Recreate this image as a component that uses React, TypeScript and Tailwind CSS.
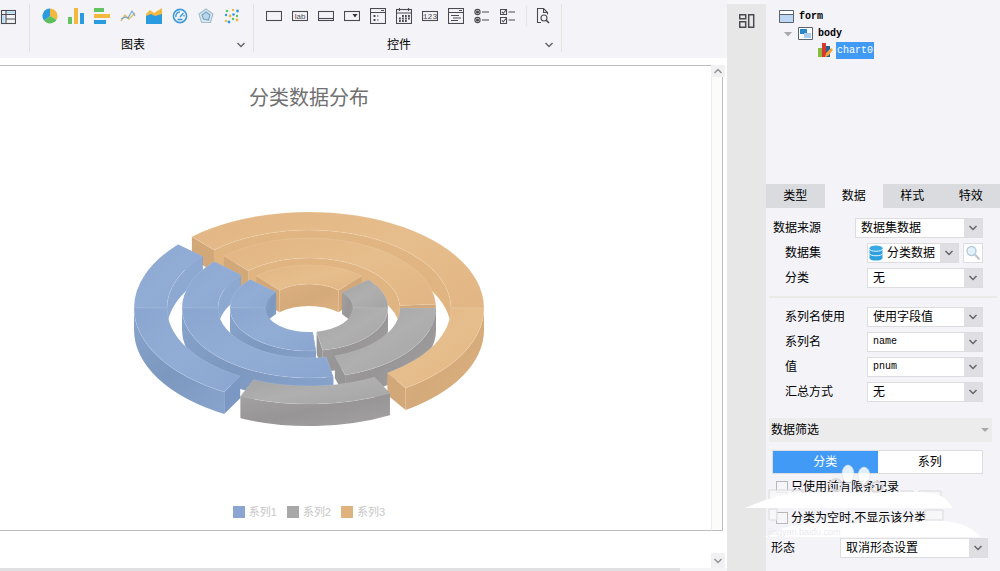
import React, { useState } from 'react';

const CX = 176;
const CY = 97;
const DEPTH = 22;

const RINGS = [
  { rx: 175, ry: 96, irx: 142, iry: 78 },
  { rx: 127, ry: 70, irx: 91, iry: 50 },
  { rx: 79, ry: 43, irx: 44, iry: 24 },
];

type Tone = { top: string; wall: string; side: string; inner: string };

const BLUE: Tone = { top: 'url(#blueTop)', wall: 'url(#blueWall)', side: '#7b97c3', inner: '#8ea9d1' };
const GREY: Tone = { top: 'url(#greyTop)', wall: 'url(#greyWall)', side: '#979696', inner: '#a9a8a8' };
const ORANGE: Tone = { top: 'url(#orangeTop)', wall: 'url(#orangeWall)', side: '#d3a878', inner: '#e0b582' };

// Angles in degrees, clockwise from the right hand side
const SLICES: { ring: number; from: number; to: number; tone: Tone }[] = [
  { ring: 0, from: -132, to: 56.5, tone: ORANGE },
  { ring: 0, from: 62.5, to: 113, tone: GREY },
  { ring: 0, from: 119, to: 221.5, tone: BLUE },
  { ring: 1, from: -132, to: -3, tone: ORANGE },
  { ring: 1, from: 0, to: 73.5, tone: GREY },
  { ring: 1, from: 79, to: 221.5, tone: BLUE },
  { ring: 2, from: -132, to: -48, tone: ORANGE },
  { ring: 2, from: -41, to: 80, tone: GREY },
  { ring: 2, from: 85, to: 221.5, tone: BLUE },
];

const point = (rx: number, ry: number, deg: number, dy = 0) => {
  const a = (deg * Math.PI) / 180;
  return `${(CX + rx * Math.cos(a)).toFixed(2)} ${(CY + ry * Math.sin(a) + dy).toFixed(2)}`;
};

const Segment: React.FC<{ ring: number; from: number; to: number; tone: Tone; back: boolean; cutFrom: boolean; cutTo: boolean }> = ({
  ring, from, to, tone, back, cutFrom, cutTo,
}) => {
  const { rx, ry, irx, iry } = RINGS[ring];
  const wx = back ? irx : rx;
  const wy = back ? iry : ry;
  const top = `M${point(rx, ry, from)}A${rx} ${ry} 0 0 1 ${point(rx, ry, to)}L${point(irx, iry, to)}A${irx} ${iry} 0 0 0 ${point(irx, iry, from)}Z`;
  const wall = `M${point(wx, wy, from)}A${wx} ${wy} 0 0 1 ${point(wx, wy, to)}L${point(wx, wy, to, DEPTH)}A${wx} ${wy} 0 0 0 ${point(wx, wy, from, DEPTH)}Z`;
  const cut = (a: number) => `M${point(rx, ry, a)}L${point(irx, iry, a)}L${point(irx, iry, a, DEPTH)}L${point(rx, ry, a, DEPTH)}Z`;
  return (
    <g>
      {cutFrom && <path d={cut(from)} fill={tone.side} />}
      {cutTo && <path d={cut(to)} fill={tone.side} />}
      <path d={wall} fill={back && ring < 2 ? tone.inner : tone.wall} />
      <path d={top} fill={tone.top} stroke="#fff" strokeOpacity="0.18" strokeWidth="0.6" />
    </g>
  );
};

const RingChart: React.FC = () => {
  const parts = SLICES.flatMap((s) => {
    const list = [];
    if (s.from < 0) list.push({ ...s, to: Math.min(s.to, 0), back: true, cutFrom: true, cutTo: s.to < 0 });
    if (s.to > 180) list.push({ ...s, from: 180, back: true, cutFrom: false, cutTo: true });
    if (s.to > 0) list.push({ ...s, from: Math.max(s.from, 0), to: Math.min(s.to, 180), back: false, cutFrom: s.from >= 0, cutTo: s.to <= 180 });
    return list;
  });
  // far half is painted outside in, near half inside out
  const ordered = [
    ...parts.filter((p) => p.back).sort((a, b) => a.ring - b.ring),
    ...parts.filter((p) => !p.back).sort((a, b) => b.ring - a.ring),
  ];
  const gradients = [
    ['blueTop', '#8aa6d0', '#92add5'],
    ['blueWall', '#88a4cd', '#7d98bf'],
    ['greyTop', '#a5a4a4', '#b0afaf'],
    ['greyWall', '#a3a1a1', '#979595'],
    ['orangeTop', '#e2b684', '#e6bd8c'],
    ['orangeWall', '#dcb07f', '#d5aa7a'],
  ];
  return (
    <svg width="352" height="216" viewBox="0 0 352 216" role="img" aria-label="分类数据分布">
      <defs>
        {gradients.map(([id, a, b]) => (
          <linearGradient key={id} id={id} x1="0" y1="0" x2="1" y2="1">
            <stop offset="0" stopColor={a} />
            <stop offset="0.5" stopColor={b} />
            <stop offset="1" stopColor={a} />
          </linearGradient>
        ))}
      </defs>
      {ordered.map((p, i) => (
        <Segment key={i} {...p} />
      ))}
    </svg>
  );
};

const Icon: React.FC<{ children: React.ReactNode; size?: number }> = ({ children, size = 16 }) => (
  <svg width={size} height={size} viewBox="0 0 16 16" fill="none" stroke="#4a4a50" strokeWidth="1.1" aria-hidden="true">
    {children}
  </svg>
);

const Chevron: React.FC<{ up?: boolean }> = ({ up }) => (
  <svg width="10" height="10" viewBox="0 0 10 10" fill="none" stroke="#66666c" strokeWidth="1.5" aria-hidden="true">
    <path d={up ? 'M1.5 7 5 3.5 8.5 7' : 'M1.5 3 5 6.5 8.5 3'} />
  </svg>
);

const chartIcons = [
  { name: '饼图', icon: <g stroke="none"><path d="M8 8V.5A7.5 7.5 0 0 1 14.5 11.7z" fill="#f3b83f" /><path d="M8 8l6.5 3.7A7.5 7.5 0 0 1 2 12.5z" fill="#5cbf5a" /><path d="M8 8 2 12.5A7.5 7.5 0 0 1 8 .5z" fill="#2b9be0" /></g> },
  { name: '柱形图', icon: <g stroke="none"><path d="M12 5h4v11h-4z" fill="#2b9be0" /><path d="M0 9h4v7H0z" fill="#62c462" /><path d="M6 0h4v16H6z" fill="#f3b83f" /></g> },
  { name: '条形图', icon: <g stroke="none"><path d="M0 0h10v4H0z" fill="#62c462" /><path d="M0 6h16v4H0z" fill="#f3b83f" /><path d="M0 12h12v4H0z" fill="#2b9be0" /></g> },
  { name: '折线图', icon: <><path d="M1 13 5 7l4 4 6-6" stroke="#e4bd6a" strokeWidth="1.4" /><path d="M1 11l4-2 3 1 4-7 3 5" stroke="#6aa3c9" /></> },
  { name: '面积图', icon: <g stroke="none"><path d="M0 6l4-4 4 3 8-5v10H0z" fill="#f3b83f" /><path d="M0 8l5-2 4 2 7-2v10H0z" fill="#2b9be0" /></g> },
  { name: '仪表盘', icon: <><circle cx="8" cy="8" r="6.6" stroke="#3f9bd8" strokeWidth="1.6" /><path d="M4 9a4 4 0 0 1 4-5M12 8.5V7M8 9l3.5-4" stroke="#3f9bd8" strokeWidth="1.4" /><path d="M5.5 11.5h5" stroke="#3f9bd8" strokeWidth="1.6" /></> },
  { name: '雷达图', icon: <><path d="M8 1l7 5-2.6 8.5H3.6L1 6z" fill="#dce6ee" stroke="#a4bccb" /><path d="M8 4l4 3-1.5 5-5-1L4 7z" fill="#b9d6e9" stroke="#6fa5c6" /></> },
  { name: '散点图', icon: <g stroke="none"><g fill="#f3b83f"><circle cx="9" cy="2" r="1.2" /><circle cx="6" cy="8" r="1.4" /><circle cx="13" cy="12" r="1.4" /><circle cx="2" cy="13" r="1.2" /></g><g fill="#2b9be0"><circle cx="13.5" cy="3" r="1.4" /><circle cx="9.5" cy="6.5" r="1.3" /><circle cx="2" cy="7" r="1.2" /><circle cx="5" cy="14" r="1.4" /></g><g fill="#62c462"><circle cx="3" cy="3" r="1.3" /><circle cx="13" cy="8" r="1.2" /><circle cx="9" cy="11" r="1.3" /></g></g> },
];

const controlIcons = [
  { name: '文本框', icon: <rect x="0.5" y="3.5" width="15" height="9" /> },
  { name: '标签', icon: <><rect x="0.5" y="3.5" width="15" height="9" /><text x="8" y="10.5" textAnchor="middle" fontSize="8" fontFamily="Liberation Sans, sans-serif" fill="#4a4a50" stroke="none">lab</text></> },
  { name: '按钮', icon: <><rect x="0.5" y="3.5" width="15" height="9" /><path d="M0 10.5h16" /></> },
  { name: '下拉框', icon: <><rect x="0.5" y="3.5" width="15" height="9" /><path d="M8.5 6h5L11 9.5z" fill="#333" stroke="none" /></> },
  { name: '下拉树', icon: <><rect x="0.5" y="0.5" width="15" height="15" /><path d="M0 4.5h16M11 2.5h3" /><path d="M3.5 7h2v2h-2zM3.5 11h2v2h-2z" fill="#4a4a50" stroke="none" /><path d="M7 8h1.5M7 12h1.5" /></> },
  { name: '日期', icon: <><rect x="0.5" y="1.5" width="15" height="14" /><path d="M0 5h16M3.5 0v3M12.5 0v3" /><path d="M6 8h8M3 10.5h11M3 13h8" strokeWidth="1.8" strokeDasharray="1.8 1.2" /></> },
  { name: '数字', icon: <><rect x="0.5" y="3.5" width="15" height="9" /><text x="8" y="10.8" textAnchor="middle" fontSize="8" fontFamily="Liberation Mono, monospace" fill="#4a4a50" stroke="none">123</text></> },
  { name: '文本域', icon: <><rect x="0.5" y="0.5" width="15" height="15" /><path d="M0 4.5h16M11 2.5h3M3 7.5h8M5 10h8M3 12.5h7" /></> },
  { name: '单选', icon: <><circle cx="3.5" cy="4" r="2.6" /><circle cx="3.5" cy="12" r="2.6" /><circle cx="3.5" cy="4" r="1" fill="#4a4a50" /><circle cx="3.5" cy="12" r="1" fill="#4a4a50" /><path d="M8 4h7M8 12h7" /></> },
  { name: '复选', icon: <><path d="M.5 1.5h6v5h-6zM.5 9.5h6v6h-6zM8.5 4H15M8.5 12H15" /><path d="M2 4l1.3 1.3L6 2M2 12.5l1.3 1.3L6 10.5" /></> },
];

const TREE_FONT = "font-['Liberation_Mono','Noto_Sans_CJK_SC',monospace]";

const ToolGroup: React.FC<{ title: string; icons: { name: string; icon: React.ReactNode }[]; extra?: React.ReactNode; width: string }> = ({
  title, icons, extra, width,
}) => (
  <div className={`${width} flex h-full flex-none flex-col`}>
    <div className="flex h-8 items-center gap-[10px] pl-3">
      {icons.map((it) => (
        <button key={it.name} title={it.name} className="flex-none">
          <Icon>{it.icon}</Icon>
        </button>
      ))}
      {extra}
    </div>
    <div className="flex h-[26px] items-center pr-[7px]">
      <span className="flex-1 text-center text-[12px]">{title}</span>
      <button aria-label={`${title} 更多`}><Chevron /></button>
    </div>
  </div>
);

const Divider = () => <div className="mt-1 h-12 w-px flex-none bg-[#e4e4de]" />;

interface DropProps {
  id: string;
  label?: string;
  options: string[];
  width: string;
  mono?: boolean;
  icon?: React.ReactNode;
}

const Drop: React.FC<DropProps> = ({ id, options, width, mono, icon, label }) => (
  <div className={`relative h-5 flex-none ${width}`}>
    {icon && <span className="absolute left-px top-[2px]">{icon}</span>}
    <select
      id={id}
      aria-label={label}
      className={`block h-5 w-full appearance-none border border-[#dcdce1] bg-white leading-[18px] outline-none ${
        icon ? 'pl-[19px]' : 'pl-[5px]'
      } ${mono ? `${TREE_FONT} text-[10px]` : 'text-[12px]'}`}
    >
      {options.map((o) => <option key={o}>{o}</option>)}
    </select>
    <span className="pointer-events-none absolute right-px top-px flex h-[18px] w-[18px] items-center justify-center bg-[#dedee3]">
      <Chevron />
    </span>
  </div>
);

const Field: React.FC<{ id: string; label: string; outer?: boolean; children: React.ReactNode }> = ({ id, label, outer, children }) => (
  <div className={`flex h-[25px] items-center justify-between pr-[17px] ${outer ? 'pl-[7px]' : 'pl-[19px]'}`}>
    <label htmlFor={id}>{label}</label>
    {children}
  </div>
);

const DatabaseIcon = () => (
  <svg width="16" height="16" viewBox="0 0 16 16" aria-hidden="true">
    <path d="M1.5 3v10c0 3.4 13 3.4 13 0V3z" fill="#2ea0de" />
    <ellipse cx="8" cy="3" rx="6.5" ry="2.5" fill="#39aae6" />
    <path d="M1.5 4c0 3 13 3 13 0M1.5 8.5c0 3 13 3 13 0" fill="none" stroke="#e9f6fd" strokeWidth="1" />
  </svg>
);

const Tree = () => (
  <ul className={`h-[184px] flex-none pt-2 text-[10px] font-semibold ${TREE_FONT}`}>
    <li className="flex h-[17px] items-center gap-[5px] pl-[13px]">
      <svg width="15" height="15" viewBox="0 0 15 15" aria-hidden="true"><path d="M.5 1.5h14v12H.5z" fill="#bcd6f3" stroke="#5b6570" /><path d="M1 2h13v3H1z" fill="#fff" /><path d="M1 5.5h13" stroke="#5b6570" /></svg>
      form
    </li>
    <li className="flex h-[17px] items-center gap-[5px] pl-[17px]">
      <svg width="10" height="8" viewBox="0 0 10 8" aria-hidden="true"><path d="M1 2h8L5 6.5z" fill="#a9a9ac" /></svg>
      <svg width="15" height="15" viewBox="0 0 15 15" aria-hidden="true"><path d="M.5 1.5h14v12H.5z" fill="#fff" stroke="#5b6570" /><path d="M2 3h7v5H2z" fill="#2787c9" /><path d="M6 7h7v5H6z" fill="#a8cdf0" /></svg>
      body
    </li>
    <li className="flex h-[17px] items-center gap-[3px] pl-[52px]">
      <svg width="15" height="15" viewBox="0 0 15 15" aria-hidden="true"><path d="M0 5h4v9H0z" fill="#8aba3c" /><path d="M8 3h4v11H8z" fill="#20639c" /><path d="M4 0h4v14H4z" fill="#d8382f" /><path d="M7 14l1-4 5-5 2 2-5 6z" fill="#f2a33c" /></svg>
      <span className="bg-[#419af5] px-px leading-[17px] font-normal text-white">chart0</span>
    </li>
  </ul>
);

// Cloud mark with paw dots laid over the lower options
const CloudMark = () => (
  <svg className="pointer-events-none absolute -left-[25px] -top-[11px]" width="260" height="97" viewBox="0 0 260 97" aria-hidden="true">
    <g fill="#f7f7fa" fillOpacity="0.8" stroke="#d9d9de" strokeWidth="1">
      <path d="M28 27h34v9H28zM160 28h12v9h-12zM178 28h22v9h-22zM28 46h8v11h-8zM184 47h18v10h-18z" />
    </g>
    <g fill="#fff" fillOpacity="0.85" stroke="#d5dce5" strokeWidth="0.6">
      <ellipse cx="107" cy="11" rx="6" ry="9" />
      <ellipse cx="123" cy="13" rx="6" ry="9" />
      <circle cx="95" cy="22" r="6" fill="none" stroke="#dcdce0" strokeWidth="2" />
      <ellipse cx="136" cy="24" rx="6" ry="5" fill="none" stroke="#dcdce0" strokeWidth="2" />
    </g>
    <path d="M4 45C16 40 26 36 38 33c30-5 60-3 92-3 28 0 58-4 72 4 4 3 7 7 10 11z" fill="#fff" />
    <path d="M24 74C34 68 44 63 58 62c40-3 80-1 112-3 20-2 40-2 52 3 8 3 14 8 18 12z" fill="#fff" />
    <text x="27" y="72" fontSize="9" fontFamily="Liberation Sans, sans-serif" fill="#e9e9ed">jingyan.baidu.com</text>
  </svg>
);

const tabs = ['类型', '数据', '样式', '特效'];

const PropertyPanel: React.FC = () => {
  const [tab, setTab] = useState('数据');
  const [filter, setFilter] = useState('分类');

  return (
    <aside className="flex w-[234px] flex-none flex-col">
      <Tree />
      <div className="grid h-6 flex-none grid-cols-4 bg-[#d9dbdf]" role="tablist">
        {tabs.map((t) => (
          <button key={t} role="tab" aria-selected={t === tab} onClick={() => setTab(t)} className={t === tab ? 'bg-[#f3f3f8]' : ''}>
            {t}
          </button>
        ))}
      </div>

      <div className="pt-[7px]">
        <Field id="source" label="数据来源" outer>
          <Drop id="source" options={['数据集数据']} width="w-[128px]" />
        </Field>
        <Field id="dataset" label="数据集">
          <div className="flex gap-1">
            <Drop id="dataset" options={['分类数据']} width="w-[92px]" icon={<DatabaseIcon />} />
            <button aria-label="查看" className="flex h-5 w-5 items-center justify-center border border-[#dcdce1] bg-white">
              <svg width="16" height="16" viewBox="0 0 16 16" fill="none" aria-hidden="true"><circle cx="6.5" cy="6" r="4.5" fill="#e3f1fa" stroke="#b4cbdc" strokeWidth="1.4" /><path d="M10 9.5l4.5 5" stroke="#c2c4c8" strokeWidth="2" /></svg>
            </button>
          </div>
        </Field>
        <Field id="category" label="分类">
          <Drop id="category" options={['无']} width="w-[116px]" />
        </Field>
      </div>
      <hr className="mx-[3px] my-[6px] border-t-2 border-[#e9e9e6]" />
      <Field id="seriesUse" label="系列名使用">
        <Drop id="seriesUse" options={['使用字段值']} width="w-[116px]" />
      </Field>
      <Field id="seriesName" label="系列名">
        <Drop id="seriesName" options={['name']} width="w-[116px]" mono />
      </Field>
      <Field id="value" label="值">
        <Drop id="value" options={['pnum']} width="w-[116px]" mono />
      </Field>
      <Field id="summary" label="汇总方式">
        <Drop id="summary" options={['无']} width="w-[116px]" />
      </Field>

      <button className="mt-[14px] mr-2 ml-[3px] flex h-6 flex-none items-center justify-between bg-[#ececed] px-[2px]">
        数据筛选
        <svg width="10" height="8" viewBox="0 0 10 8" aria-hidden="true"><path d="M1 2h8L5 6z" fill="#a9a9ac" /></svg>
      </button>
      <div className="mt-2 mr-[17px] ml-[6px] grid h-6 flex-none grid-cols-2 border border-[#dcdce1] bg-white">
        {['分类', '系列'].map((f) => (
          <button key={f} onClick={() => setFilter(f)} className={f === filter ? 'bg-[#419af5] text-white' : ''}>
            {f}
          </button>
        ))}
      </div>
      <div className="relative">
        <label className="flex h-[25px] items-center gap-[3px] pl-[10px]">
          <input type="checkbox" className="h-3 w-3 appearance-none border border-[#b8b8bc] bg-[#f6f6f9]" />
          只使用前有限条记录
        </label>
        <label className="mt-[6px] flex h-[25px] items-center gap-[3px] pl-[10px]">
          <input type="checkbox" className="h-3 w-3 appearance-none border border-[#b8b8bc] bg-[#f6f6f9]" />
          分类为空时,不显示该分类
        </label>
        <CloudMark />
        <div className="relative mt-[5px] flex h-[25px] items-center justify-between pr-3 pl-[5px]">
          <label htmlFor="shape">形态</label>
          <Drop id="shape" options={['取消形态设置']} width="w-[148px]" />
        </div>
      </div>
    </aside>
  );
};

const legend = [
  { label: '系列1', color: 'bg-[#8aa5cf]' },
  { label: '系列2', color: 'bg-[#a9a8a8]' },
  { label: '系列3', color: 'bg-[#e0b27e]' },
];

export default function App() {
  return (
    <div className="flex h-screen overflow-hidden bg-[#f3f3f8] font-['Liberation_Sans','Noto_Sans_CJK_SC',sans-serif] text-[12px] leading-4 text-black">
      <main className="flex min-w-0 flex-1 flex-col bg-white">
        <header className="flex h-[58px] flex-none bg-[#f4f4f8]">
          <div className="w-[29px] flex-none pt-[9px]">
            <button title="表格">
              <Icon><rect x="1.5" y="1.5" width="14" height="13" /><path d="M1 5.5h14M6 1v14M6 10h9" /><path d="M7 3.5h8M3.5 6v8" stroke="#a7dcf5" strokeWidth="2" /></Icon>
            </button>
          </div>
          <Divider />
          <ToolGroup title="图表" icons={chartIcons} width="w-[223px]" />
          <Divider />
          <ToolGroup
            title="控件"
            icons={controlIcons}
            width="w-[307px]"
            extra={
              <div className="flex items-center gap-2">
                <span className="h-5 w-px bg-[#e4e4de]" />
                <button title="预览">
                  <Icon><path d="M6 14.5H2.5V.5h6l4 4v2M8.5.5v4h4" /><circle cx="9" cy="10" r="3" /><path d="M11 12l3 3" strokeWidth="1.6" /></Icon>
                </button>
              </div>
            }
          />
          <Divider />
        </header>

        <div className="mt-[7px] flex min-h-0 flex-1">
          <div className="flex flex-1 flex-col">
            <section className="flex flex-1 flex-col items-center border-y border-[#bdbdbd] pt-4 pr-[93px]">
              <h1 className="text-[20px] leading-8 text-[#707070]">分类数据分布</h1>
              <div className="mt-[97px]"><RingChart /></div>
              <ul className="mt-auto mb-2 flex h-5 items-center gap-[10px] text-[#c6c6c6]">
                {legend.map((l) => (
                  <li key={l.label} className="flex items-center gap-1 text-[11px]">
                    <span className={`h-3 w-3 ${l.color}`} />
                    {l.label}
                  </li>
                ))}
              </ul>
            </section>
            <div className="h-[37px] flex-none" />
          </div>
          <div className="flex w-4 flex-none flex-col">
            <button aria-label="向上滚动" className="flex h-3 w-[14px] items-center justify-center bg-[#ececee] opacity-70"><Chevron up /></button>
            <div className="mr-1 flex-1 border-r border-b border-[#bdbdbd] border-l border-l-[#ececea] bg-[#fcfcfa]" />
            <div className="h-[22px]" />
            <button aria-label="向下滚动" className="flex h-[15px] w-[14px] items-center justify-center bg-[#ececee] opacity-70"><Chevron /></button>
          </div>
        </div>
        <div className="h-[3px] flex-none bg-[#f4f4f6] pr-[47px]"><div className="h-full bg-[#e0e0e2]" /></div>
      </main>

      <nav className="flex w-[39px] flex-none flex-col items-center border-t-4 border-[#f6f6f8] bg-[#e7e7e8] pt-[9px]">
        <button title="组件">
          <Icon><path d="M.7 1.7h6v4h-6zM.7 8.7h6v5.6h-6zM9.7 1.7h5v12.6h-5z" strokeWidth="1.5" /></Icon>
        </button>
      </nav>

      <PropertyPanel />
    </div>
  );
}
